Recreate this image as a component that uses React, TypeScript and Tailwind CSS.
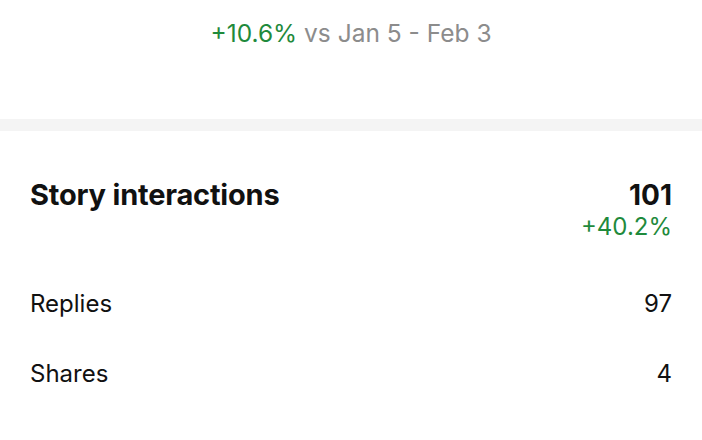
export default function App() {
  const rows = [
    { label: "Replies", value: "97" },
    { label: "Shares", value: "4" },
  ];

  return (
    <div className="w-[702px] h-[440px] bg-white overflow-hidden font-['Inter',sans-serif] text-[#111]">
      <div className="h-[119px] pt-[18px] text-center text-[24.5px] leading-[30px]">
        <span className="text-[#1f8a3c]">+10.6%</span>{" "}
        <span className="text-[#8c8c8c]">vs Jan 5 - Feb 3</span>
      </div>
      <div className="h-[12px] bg-[#f4f4f4]" />

      <div className="px-[30px] pt-[47px]">
        <div className="flex justify-between">
          <div className="text-[29px] leading-[34px] font-bold tracking-[-0.2px]">Story interactions</div>
          <div className="flex flex-col items-end">
            <div className="text-[28px] leading-[34px] font-bold">101</div>
            <div className="text-[24px] leading-[30px] text-[#1f8a3c]">+40.2%</div>
          </div>
        </div>

        <div className="mt-[47px] flex flex-col gap-[40px]">
          {rows.map((r) => (
            <div key={r.label} className="flex justify-between text-[24px] leading-[30px]">
              <span>{r.label}</span>
              <span>{r.value}</span>
            </div>
          ))}
        </div>
      </div>
    </div>
  );
}
